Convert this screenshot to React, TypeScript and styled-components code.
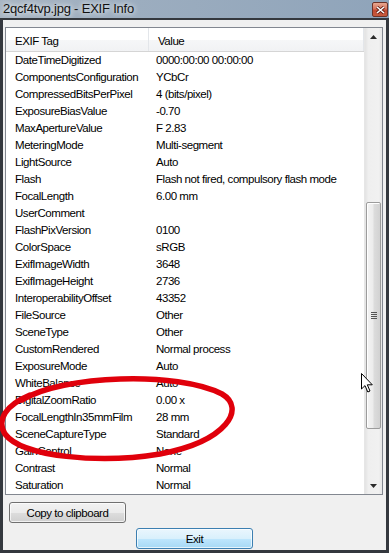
import styled, { createGlobalStyle } from 'styled-components';

const GlobalStyle = createGlobalStyle`
  html, body {
    margin: 0;
    padding: 0;
    background: #ffffff;
  }
  body {
    font-family: "Liberation Sans", Arial, sans-serif;
    font-size: 11.5px;
    letter-spacing: -0.45px;
    color: #000;
  }
`;

const exifRows: [string, string][] = [
  ['DateTimeDigitized', '0000:00:00 00:00:00'],
  ['ComponentsConfiguration', 'YCbCr'],
  ['CompressedBitsPerPixel', '4 (bits/pixel)'],
  ['ExposureBiasValue', '-0.70'],
  ['MaxApertureValue', 'F 2.83'],
  ['MeteringMode', 'Multi-segment'],
  ['LightSource', 'Auto'],
  ['Flash', 'Flash not fired, compulsory flash mode'],
  ['FocalLength', '6.00 mm'],
  ['UserComment', ''],
  ['FlashPixVersion', '0100'],
  ['ColorSpace', 'sRGB'],
  ['ExifImageWidth', '3648'],
  ['ExifImageHeight', '2736'],
  ['InteroperabilityOffset', '43352'],
  ['FileSource', 'Other'],
  ['SceneType', 'Other'],
  ['CustomRendered', 'Normal process'],
  ['ExposureMode', 'Auto'],
  ['WhiteBalance', 'Auto'],
  ['DigitalZoomRatio', '0.00 x'],
  ['FocalLengthIn35mmFilm', '28 mm'],
  ['SceneCaptureType', 'Standard'],
  ['GainControl', 'None'],
  ['Contrast', 'Normal'],
  ['Saturation', 'Normal'],
];

export default function App() {
  return (
    <>
      <GlobalStyle />
      <S.Window>
        <S.TitleBar>
          <S.Caption>2qcf4tvp.jpg - EXIF Info</S.Caption>
          <S.CloseButton>
            <svg width="9" height="8" viewBox="0 0 9 8">
              <path d="M1 1 L8 7 M8 1 L1 7" stroke="#5a1a12" strokeWidth="3" />
              <path d="M1 1 L8 7 M8 1 L1 7" stroke="#ffffff" strokeWidth="1.6" />
            </svg>
          </S.CloseButton>
        </S.TitleBar>
        <S.Frame>
          <S.ListView>
            <S.ListContent>
              <S.Header>
                <S.HeaderCell>EXIF Tag</S.HeaderCell>
                <S.HeaderCell>Value</S.HeaderCell>
              </S.Header>
              {exifRows.map(([tag, value]) => (
                <S.Row key={tag}>
                  <S.TagCell>{tag}</S.TagCell>
                  <S.ValueCell>{value}</S.ValueCell>
                </S.Row>
              ))}
            </S.ListContent>
            <S.ScrollBar>
              <S.ArrowButton>
                <svg width="7" height="4" viewBox="0 0 7 4">
                  <path d="M0 4 L3.5 0 L7 4 Z" fill="#2b2b2b" />
                </svg>
              </S.ArrowButton>
              <S.Track>
                <S.Thumb>
                  <S.Grip>
                    <i />
                    <i />
                    <i />
                    <i />
                  </S.Grip>
                </S.Thumb>
              </S.Track>
              <S.ArrowButton>
                <svg width="7" height="4" viewBox="0 0 7 4">
                  <path d="M0 0 L7 0 L3.5 4 Z" fill="#2b2b2b" />
                </svg>
              </S.ArrowButton>
            </S.ScrollBar>
          </S.ListView>
          <S.ButtonRow>
            <S.Button>Copy to clipboard</S.Button>
          </S.ButtonRow>
          <S.ButtonRow $center>
            <S.Button $default>Exit</S.Button>
          </S.ButtonRow>
        </S.Frame>

        {/* hand-drawn red marker ring over the list */}
        <S.Overlay width="390" height="555" viewBox="0 0 390 555">
          <path
            d="M 22 400 C 62 375, 178 371, 222 394 C 246 408, 228 441, 160 454 C 100 464, 22 457, 5 434 C -4 420, 6 405, 30 395"
            fill="none"
            stroke="#e0000b"
            strokeWidth="5.5"
            strokeLinecap="round"
          />
        </S.Overlay>
        <S.Cursor width="13" height="20" viewBox="0 0 13 20">
          <path
            d="M0.5 0.5 L0.5 16 L4 12.6 L6.8 19 L9 18 L6.3 11.8 L11.3 11.8 Z"
            fill="#ffffff"
            stroke="#000000"
            strokeWidth="1"
            strokeLinejoin="round"
          />
        </S.Cursor>
      </S.Window>
    </>
  );
}

const S = {
  Window: styled.div`
    position: relative;
    width: 389px;
    height: 553px;
    display: flex;
    flex-direction: column;
    box-sizing: border-box;
  `,
  TitleBar: styled.div`
    height: 18px;
    display: flex;
    align-items: center;
    justify-content: space-between;
    padding-left: 3px;
    padding-right: 1px;
    background: linear-gradient(90deg, #a8b5c3 0%, #9cadbf 35%, #8fa4ba 100%);
    box-sizing: border-box;
  `,
  Caption: styled.div`
    font-family: "Liberation Sans", Arial, sans-serif;
    font-size: 13px;
    letter-spacing: -0.2px;
    color: #111;
    text-shadow: 0 0 5px rgba(255, 255, 255, 0.9), 0 0 9px rgba(255, 255, 255, 0.6);
    line-height: 18px;
  `,
  CloseButton: styled.div`
    width: 16px;
    height: 15px;
    margin-top: 1px;
    display: flex;
    align-items: center;
    justify-content: center;
    border: 1px solid #6e3328;
    border-radius: 2px;
    box-sizing: border-box;
    background: linear-gradient(180deg, #e8a891 0%, #d7735c 45%, #c24a31 55%, #c7593c 100%);
  `,
  Frame: styled.div`
    flex: 1;
    display: flex;
    flex-direction: column;
    background: #f0f0f0;
    border-style: solid;
    border-color: #34383e;
    border-width: 2px 3px 3px 3px;
    box-sizing: border-box;
  `,
  ListView: styled.div`
    margin: 7px 3px 0 2px;
    height: 468px;
    display: flex;
    border: 1px solid #828790;
    background: #ffffff;
    box-sizing: border-box;
    overflow: hidden;
  `,
  ListContent: styled.div`
    flex: 1;
    display: flex;
    flex-direction: column;
  `,
  Header: styled.div`
    height: 24px;
    display: grid;
    grid-template-columns: 143px 215px;
    background: linear-gradient(180deg, #ffffff 0%, #ffffff 50%, #f6f7f8 51%, #f1f2f4 100%);
    border-bottom: 1px solid #d5d5d5;
    box-sizing: border-box;
  `,
  HeaderCell: styled.div`
    display: flex;
    align-items: center;
    padding: 2px 0 0 9px;
    border-right: 1px solid #e3e6ea;
    color: #000;
  `,
  Row: styled.div`
    height: 17px;
    flex: none;
    display: grid;
    grid-template-columns: 143px 1fr;
    align-items: center;
    line-height: 17px;
    white-space: nowrap;
  `,
  TagCell: styled.div`
    padding-left: 9px;
    overflow: hidden;
  `,
  ValueCell: styled.div`
    padding-left: 7px;
    overflow: hidden;
  `,
  ScrollBar: styled.div`
    width: 17px;
    flex: none;
    display: flex;
    flex-direction: column;
    background: linear-gradient(90deg, #e3e3e3 0%, #efefef 20%, #f1f1f1 80%, #e6e6e6 100%);
    border-left: 1px solid #e6e6e6;
  `,
  ArrowButton: styled.div`
    height: 17px;
    flex: none;
    display: flex;
    align-items: center;
    justify-content: center;
  `,
  Track: styled.div`
    flex: 1;
    display: flex;
    flex-direction: column;
    align-items: center;
  `,
  Thumb: styled.div`
    margin-top: 157px;
    width: 15px;
    height: 227px;
    display: flex;
    align-items: center;
    justify-content: center;
    border: 1px solid #9c9c9c;
    border-radius: 2px;
    box-sizing: border-box;
    background: linear-gradient(90deg, #f4f4f4 0%, #ececec 45%, #dcdcdc 55%, #d2d2d2 100%);
    box-shadow: inset 1px 1px 0 #ffffff;
  `,
  Grip: styled.div`
    display: flex;
    flex-direction: column;
    gap: 1px;
    i {
      display: block;
      width: 6px;
      height: 1px;
      background: #555;
    }
  `,
  ButtonRow: styled.div<{ $center?: boolean }>`
    display: flex;
    justify-content: ${(p) => (p.$center ? 'center' : 'flex-start')};
    margin-top: ${(p) => (p.$center ? '5px' : '7px')};
    padding-left: ${(p) => (p.$center ? '0' : '6px')};
  `,
  Button: styled.div<{ $default?: boolean }>`
    width: 117px;
    height: 21px;
    display: flex;
    align-items: center;
    justify-content: center;
    box-sizing: border-box;
    border: 1px solid ${(p) => (p.$default ? '#3c7fb1' : '#707070')};
    border-radius: 3px;
    color: #000;
    background: ${(p) =>
      p.$default
        ? 'linear-gradient(180deg, #eaf6fd 0%, #d9f0fc 50%, #bee6fd 51%, #a7d9f5 100%)'
        : 'linear-gradient(180deg, #f2f2f2 0%, #ebebeb 50%, #dddddd 51%, #cfcfcf 100%)'};
    box-shadow: inset 0 0 0 1px rgba(255, 255, 255, 0.7);
  `,
  Overlay: styled.svg`
    position: absolute;
    left: 0;
    top: 0;
    pointer-events: none;
  `,
  Cursor: styled.svg`
    position: absolute;
    left: 361px;
    top: 373px;
    pointer-events: none;
  `,
};
